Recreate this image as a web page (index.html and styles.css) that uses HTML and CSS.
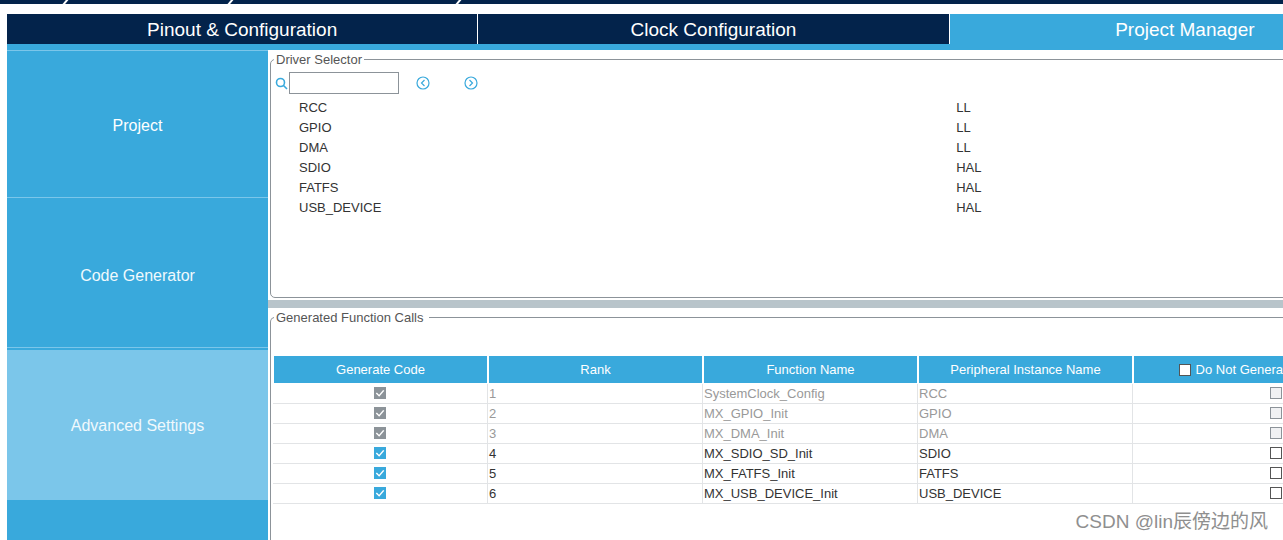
FILE: index.html
```
<!DOCTYPE html>
<html lang="en">
<head>
<meta charset="utf-8">
<title>Project Manager</title>
<link rel="stylesheet" href="styles.css">
</head>
<body>
<div class="crumb-strip" aria-hidden="true">
  <svg class="slash slash-a" width="10" height="4" viewBox="0 0 10 4"><path d="M1 5 6 -1"/></svg>
  <svg class="slash slash-b" width="10" height="4" viewBox="0 0 10 4"><path d="M1 5 6 -1"/></svg>
  <svg class="slash slash-c" width="10" height="4" viewBox="0 0 10 4"><path d="M1 5 6 -1"/></svg>
</div>
<div class="app">
  <nav class="tabs">
    <button class="tab">Pinout &amp; Configuration</button>
    <button class="tab">Clock Configuration</button>
    <button class="tab tab-active">Project Manager</button>
  </nav>
  <div class="workspace">
    <nav class="sidebar">
      <button class="side-item side-first">Project</button>
      <button class="side-item">Code Generator</button>
      <button class="side-item side-active">Advanced Settings</button>
    </nav>
    <main class="content">
      <fieldset class="group drivers">
        <legend>Driver Selector</legend>
        <div class="search">
          <label for="search" aria-label="Search"><svg class="lens" width="13" height="13" viewBox="0 0 13 13"><circle cx="5.5" cy="5.5" r="4"/><path d="M8.5 8.5 12 12"/></svg></label>
          <input id="search" class="search-box" type="text">
          <button class="step" aria-label="Previous"><svg width="14" height="14" viewBox="0 0 14 14"><circle cx="7" cy="7" r="6"/><path d="M8.5 4 5.5 7l3 3"/></svg></button>
          <button class="step" aria-label="Next"><svg width="14" height="14" viewBox="0 0 14 14"><circle cx="7" cy="7" r="6"/><path d="M5.5 4l3 3-3 3"/></svg></button>
        </div>
        <table class="driver-list">
          <tr><td>RCC</td><td>LL</td></tr>
          <tr><td>GPIO</td><td>LL</td></tr>
          <tr><td>DMA</td><td>LL</td></tr>
          <tr><td>SDIO</td><td>HAL</td></tr>
          <tr><td>FATFS</td><td>HAL</td></tr>
          <tr><td>USB_DEVICE</td><td>HAL</td></tr>
        </table>
      </fieldset>
      <div class="splitter"></div>
      <fieldset class="group calls">
        <legend class="legend-wide">Generated Function Calls</legend>
        <table class="call-table">
          <colgroup><col class="col"><col class="col"><col class="col"><col class="col"><col></colgroup>
          <thead>
            <tr><th>Generate Code</th><th>Rank</th><th>Function Name</th><th>Peripheral Instance Name</th><th><label class="all"><input class="check" type="checkbox">Do Not Generate Function Call</label></th></tr>
          </thead>
          <tbody>
            <tr class="locked"><td><input class="check" type="checkbox" aria-label="Generate code" checked disabled></td><td>1</td><td>SystemClock_Config</td><td>RCC</td><td><input class="check" type="checkbox" aria-label="Do not generate call" disabled></td></tr>
            <tr class="locked"><td><input class="check" type="checkbox" aria-label="Generate code" checked disabled></td><td>2</td><td>MX_GPIO_Init</td><td>GPIO</td><td><input class="check" type="checkbox" aria-label="Do not generate call" disabled></td></tr>
            <tr class="locked"><td><input class="check" type="checkbox" aria-label="Generate code" checked disabled></td><td>3</td><td>MX_DMA_Init</td><td>DMA</td><td><input class="check" type="checkbox" aria-label="Do not generate call" disabled></td></tr>
            <tr><td><input class="check" type="checkbox" aria-label="Generate code" checked></td><td>4</td><td>MX_SDIO_SD_Init</td><td>SDIO</td><td><input class="check" type="checkbox" aria-label="Do not generate call"></td></tr>
            <tr><td><input class="check" type="checkbox" aria-label="Generate code" checked></td><td>5</td><td>MX_FATFS_Init</td><td>FATFS</td><td><input class="check" type="checkbox" aria-label="Do not generate call"></td></tr>
            <tr><td><input class="check" type="checkbox" aria-label="Generate code" checked></td><td>6</td><td>MX_USB_DEVICE_Init</td><td>USB_DEVICE</td><td><input class="check" type="checkbox" aria-label="Do not generate call"></td></tr>
          </tbody>
        </table>
      </fieldset>
    </main>
  </div>
</div>
<div class="watermark">CSDN @lin辰傍边的风</div>
</body>
</html>
```

FILE: styles.css
```
* { box-sizing: border-box; }

body {
  margin: 0;
  height: 100vh;
  overflow: hidden;
  display: flex;
  flex-direction: column;
  background: #fff;
  color: #333;
  font: 13px/16px "Liberation Sans", Arial, sans-serif;
}

button {
  border: 0;
  padding: 0;
  background: none;
  color: #fff;
  font-family: inherit;
}

/* bottom edge of the breadcrumb bar */
.crumb-strip {
  flex: none;
  position: relative;
  height: 4px;
  background: #03234b;
  overflow: hidden;
}
.slash { position: absolute; top: 0; fill: none; stroke: #fff; stroke-width: 2; }
.slash-a { left: 62px; }
.slash-b { left: 227px; }
.slash-c { left: 455px; }

/* the application is wider than the view and runs past its right edge */
.app {
  flex: 1;
  min-height: 0;
  width: calc(100% + 130px);
  margin: 10px 0 0 7px;
  display: flex;
  flex-direction: column;
}

.tabs {
  flex: none;
  display: grid;
  grid-template-columns: repeat(3, 1fr);
  column-gap: 1px;
  border-bottom: 6px solid #39a9dc;
}
.tab { height: 30px; padding-top: 2px; background: #03234b; font-size: 19px; }
.tab-active { background: #39a9dc; }

.workspace { flex: 1; min-height: 0; display: flex; }

.sidebar {
  flex: none;
  width: 261px;
  display: flex;
  flex-direction: column;
  background: #39a9dc;
}
.side-item {
  height: 150px;
  padding-top: 2px;
  color: #f0f9fd;
  font-size: 16px;
  box-shadow: inset 0 -2px #39a9dc, inset 0 -3px #7bc6ea;
}
.side-first { color: #fff; box-shadow: inset 0 1px #7bc6ea, inset 0 -2px #39a9dc, inset 0 -3px #7bc6ea; }
.side-active { background: #7bc6ea; box-shadow: none; }

.content { flex: 1; min-width: 0; display: flex; flex-direction: column; }

.group {
  min-width: 0;
  margin: 0 0 0 2px;
  padding: 0 0 0 2px;
  border: 1px solid #8c9399;
  border-radius: 5px;
}
.group legend { margin-left: 1px; padding: 1px 2px 0; line-height: 17px; color: #555; }
.group .legend-wide { padding-right: 6px; }
.drivers { flex: none; height: 248px; margin-bottom: 2px; }
.calls { flex: 1; border-bottom: 0; border-radius: 5px 0 0 0; }

.search { display: flex; align-items: center; padding: 4px 0 4px 2px; }
.search label { display: flex; width: 14px; }
.lens { fill: none; stroke: #39a9dc; stroke-width: 1.6; }
.search-box {
  width: 110px;
  height: 22px;
  margin-right: 17px;
  padding: 0 4px;
  border: 1px solid #8c9399;
  background: #fff;
  font: inherit;
}
.step { display: flex; width: 14px; margin-right: 34px; }
.step svg { fill: none; stroke: #39a9dc; stroke-width: 1.2; }

table { border-spacing: 0; table-layout: fixed; width: 100%; }
.driver-list td { height: 20px; padding: 0 0 0 30px; }
.driver-list td:first-child { width: 57%; padding-left: 26px; }

.splitter { flex: none; height: 8px; background: #b8c4ca; }

.call-table { margin-top: 30px; }
.col { width: 215px; }
th {
  height: 28px;
  padding: 0;
  border: solid #fff;
  border-width: 0 1px 1px;
  background: #39a9dc;
  color: #fff;
  font-weight: normal;
}
.call-table td {
  height: 20px;
  padding: 0 1px;
  border: solid #e2e4e6;
  border-width: 0 1px 1px 0;
  line-height: 19px;
}
.locked { color: #999; }
.all { display: flex; justify-content: center; align-items: center; gap: 5px; }

.check {
  appearance: none;
  flex: none;
  width: 12px;
  height: 12px;
  margin: 0;
  border: 1px solid #555;
  background: #fff;
}
td .check { display: block; margin: 3px auto 4px; }
.check:disabled { border-color: #8c9399; background: #f0f1f3; }
.check:checked { border: 0; background: #39a9dc; }
.check:checked:disabled { background: #8c9399; }
.check:checked::before {
  content: "";
  display: block;
  width: 12px;
  height: 12px;
  background: #fff;
  clip-path: polygon(15% 54%, 24% 46%, 42% 64%, 76% 24%, 86% 32%, 43% 82%);
}

.watermark {
  position: absolute;
  right: 15px;
  bottom: 6px;
  color: #8f8f8f;
  font: 19px/24px "Liberation Sans", "Noto Sans CJK SC", sans-serif;
}
```
